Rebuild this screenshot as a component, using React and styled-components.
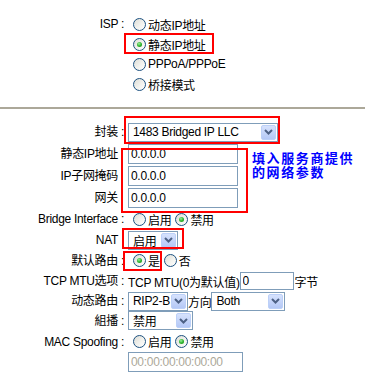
import React from "react";
import styled, { createGlobalStyle } from "styled-components";

const GlobalStyle = createGlobalStyle`
  body {
    margin: 0;
    background: #fff;
    color: #000;
    font-family: "Liberation Sans", "Noto Sans CJK SC", sans-serif;
    font-size: 12px;
    letter-spacing: -0.3px;
  }
`;

const Page = styled.div`
  position: relative;
  width: 365px;
  height: 374px;
  overflow: hidden;
`;

const IspSection = styled.div`
  display: grid;
  grid-template-columns: 124px 1fr;
  column-gap: 4px;
  box-sizing: border-box;
  height: 107px;
  padding-top: 14px;
`;

const Divider = styled.div`
  height: 2px;
  background: #aca899;
`;

const FormSection = styled.div`
  padding-top: 12px;
`;

const Row = styled.div`
  display: grid;
  grid-template-columns: 124px 1fr;
  column-gap: 4px;
  align-items: center;
  height: ${(p) => p.$h}px;
`;

const Label = styled.div`
  text-align: right;
  white-space: nowrap;
  line-height: 20px;
  padding-right: ${(p) => (p.$plain ? 6 : 0)}px;
  align-self: ${(p) => (p.$top ? "start" : "center")};
`;

const LabelStack = styled.div`
  display: flex;
  flex-direction: column;
  align-self: stretch;
`;

const StackLabel = styled.div`
  height: 22px;
  line-height: 22px;
  text-align: right;
  padding-right: 6px;
  white-space: nowrap;
`;

const Cell = styled.div`
  display: flex;
  align-items: center;
  white-space: nowrap;
`;

const OptionList = styled.div`
  display: flex;
  flex-direction: column;
`;

const Option = styled.div`
  display: flex;
  align-items: center;
  height: 20px;
  white-space: nowrap;
`;

const Radio = styled.span`
  position: relative;
  flex: none;
  box-sizing: border-box;
  width: 13px;
  height: 13px;
  margin: 0 2px 0 ${(p) => p.$ml ?? 5}px;
  border: 1px solid #1c5180;
  border-radius: 50%;
  background: linear-gradient(135deg, #dcdcd5 0%, #f2f2ee 55%, #ffffff 100%);

  &::after {
    content: "";
    display: ${(p) => (p.$on ? "block" : "none")};
    position: absolute;
    left: 3px;
    top: 3px;
    width: 5px;
    height: 5px;
    border-radius: 50%;
    background: radial-gradient(circle at 40% 35%, #9ef09e 0%, #2fb52f 50%, #1a8f1a 100%);
  }
`;

const SelectBox = styled.div`
  display: flex;
  align-items: center;
  justify-content: space-between;
  box-sizing: border-box;
  width: ${(p) => p.$w}px;
  height: 19px;
  padding: 1px 1px 1px 4px;
  border: 1px solid #7f9db9;
  background: #fff;
  white-space: nowrap;
`;

const SelectArrow = styled.span`
  display: flex;
  align-items: center;
  justify-content: center;
  box-sizing: border-box;
  width: 15px;
  height: 15px;
  border: 1px solid #bcd0f8;
  border-radius: 2px;
  background: linear-gradient(#d6e2fd, #b4c8f6);
`;

const TextField = styled.input`
  box-sizing: border-box;
  width: ${(p) => p.$w}px;
  height: ${(p) => p.$h || 20}px;
  margin: 0;
  padding: 0 2px;
  border: 1px solid #7f9db9;
  background: #fff;
  font: inherit;
  letter-spacing: inherit;
  color: ${(p) => (p.disabled ? "#aca899" : "#000")};
  outline: none;
`;

const InputStack = styled.div`
  display: flex;
  flex-direction: column;
  gap: 2px;
  padding-top: 1px;
`;

const IpBody = styled.div`
  display: flex;
  align-self: stretch;
`;

const Note = styled.div`
  display: flex;
  flex-direction: column;
  margin: 8px 0 0 14px;
  color: #0000ff;
  font-family: "Noto Sans CJK SC", sans-serif;
  font-weight: bold;
  font-size: 13px;
  letter-spacing: 1.6px;
  white-space: nowrap;
`;

const NoteLine = styled.div`
  height: 14px;
  line-height: 14px;
  overflow: visible;
`;

const Text = styled.span`
  margin-left: ${(p) => p.$ml || 0}px;
`;

const RedBox = styled.div`
  position: absolute;
  left: ${(p) => p.$x}px;
  top: ${(p) => p.$y}px;
  width: ${(p) => p.$w}px;
  height: ${(p) => p.$h}px;
  box-sizing: border-box;
  border: 2px solid #ff0000;
  pointer-events: none;
`;

const Chevron = () => (
  <svg width="9" height="6" viewBox="0 0 9 6">
    <path d="M1 1 L4.5 4.5 L8 1" fill="none" stroke="#4d6185" strokeWidth="2" />
  </svg>
);

const Select = ({ w, value }) => (
  <SelectBox $w={w}>
    <span>{value}</span>
    <SelectArrow>
      <Chevron />
    </SelectArrow>
  </SelectBox>
);

const OnOff = ({ on }) => (
  <Cell>
    <Radio $on={!on} />
    <span>启用</span>
    <Radio $on={on} $ml={4} />
    <span>禁用</span>
  </Cell>
);

export default function App() {
  const isp = ["动态IP地址", "静态IP地址", "PPPoA/PPPoE", "桥接模式"];

  return (
    <Page>
      <GlobalStyle />
      <IspSection>
        <Label $top>ISP :</Label>
        <OptionList>
          {isp.map((name, i) => (
            <Option key={name}>
              <Radio $on={i === 1} />
              <span>{name}</span>
            </Option>
          ))}
        </OptionList>
      </IspSection>
      <Divider />
      <FormSection>
        <Row $h={22}>
          <Label>封装 :</Label>
          <Cell>
            <Select w={150} value="1483 Bridged IP LLC" />
          </Cell>
        </Row>
        <Row $h={65}>
          <LabelStack>
            <StackLabel>静态IP地址</StackLabel>
            <StackLabel>IP子网掩码</StackLabel>
            <StackLabel>网关</StackLabel>
          </LabelStack>
          <IpBody>
            <InputStack>
              <TextField $w={110} readOnly value="0.0.0.0" />
              <TextField $w={110} readOnly value="0.0.0.0" />
              <TextField $w={110} readOnly value="0.0.0.0" />
            </InputStack>
            <Note>
              <NoteLine>填入服务商提供</NoteLine>
              <NoteLine>的网络参数</NoteLine>
            </Note>
          </IpBody>
        </Row>
        <Row $h={22}>
          <Label>Bridge Interface :</Label>
          <OnOff on />
        </Row>
        <Row $h={20}>
          <Label $plain>NAT</Label>
          <Cell>
            <Select w={50} value="启用" />
          </Cell>
        </Row>
        <Row $h={21}>
          <Label>默认路由 :</Label>
          <Cell>
            <Radio $on />
            <span>是</span>
            <Radio $ml={4} />
            <span>否</span>
          </Cell>
        </Row>
        <Row $h={20}>
          <Label>TCP MTU选项 :</Label>
          <Cell>
            <span>TCP MTU(0为默认值)</span>
            <TextField $w={54} $h={18} readOnly value="0" />
            <Text $ml={1}>字节</Text>
          </Cell>
        </Row>
        <Row $h={19}>
          <Label>动态路由 :</Label>
          <Cell>
            <Select w={60} value="RIP2-B" />
            <span>方向</span>
            <Select w={74} value="Both" />
          </Cell>
        </Row>
        <Row $h={21}>
          <Label>組播 :</Label>
          <Cell>
            <Select w={65} value="禁用" />
          </Cell>
        </Row>
        <Row $h={21}>
          <Label>MAC Spoofing :</Label>
          <OnOff on />
        </Row>
        <Row $h={20}>
          <span />
          <Cell>
            <TextField $w={115} disabled value="00:00:00:00:00:00" />
          </Cell>
        </Row>
      </FormSection>

      <RedBox $x={124} $y={33} $w={90} $h={21} />
      <RedBox $x={124} $y={116} $w={156} $h={28} />
      <RedBox $x={121} $y={148} $w={127} $h={65} />
      <RedBox $x={122} $y={228} $w={62} $h={21} />
      <RedBox $x={123} $y={251} $w={39} $h={20} />
    </Page>
  );
}
